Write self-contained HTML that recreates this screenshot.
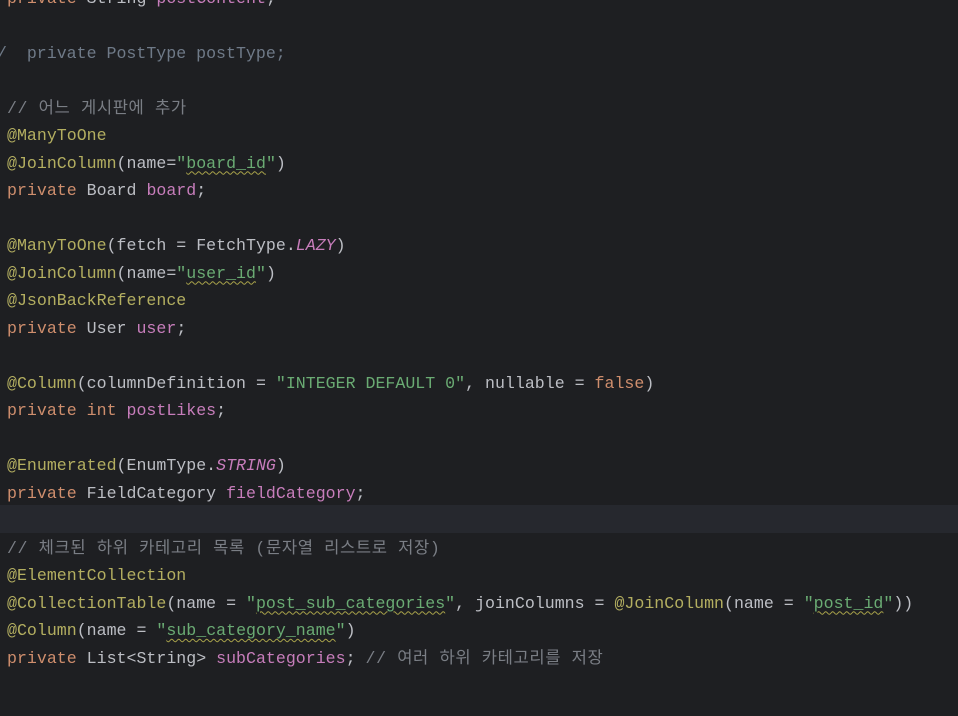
<!DOCTYPE html>
<html><head><meta charset="utf-8"><style>
html,body{margin:0;padding:0;background:#1e1f22;width:958px;height:716px;overflow:hidden}
.hl{position:absolute;left:0;top:505px;width:958px;height:28px;background:#26282e}
pre{position:absolute;left:7px;top:-15.5px;margin:0;font-family:"Liberation Mono","Noto Sans CJK KR",monospace;font-size:16.6px;line-height:27.5px;color:#bcbec4}
.k{color:#cf8e6d}.a{color:#b3ae60}.s{color:#6aab73}.f{color:#c77dbb}.c{color:#7a7e85;letter-spacing:0.6px}.i{color:#c77dbb;font-style:italic}
.w{text-decoration:underline wavy #a8a24a;text-decoration-thickness:1px;text-underline-offset:3px}
.cm{margin-left:-20px;color:#6f7a88}
</style></head><body>
<div class="hl"></div>
<pre><span class="k">private</span> String <span class="f">postContent</span>;

<span class="cm">//  private PostType postType;</span>

<span class="c">// 어느 게시판에 추가</span>
<span class="a">@ManyToOne</span>
<span class="a">@JoinColumn</span>(name=<span class="s">"<span class="w">board_id</span>"</span>)
<span class="k">private</span> Board <span class="f">board</span>;

<span class="a">@ManyToOne</span>(fetch = FetchType.<span class="i">LAZY</span>)
<span class="a">@JoinColumn</span>(name=<span class="s">"<span class="w">user_id</span>"</span>)
<span class="a">@JsonBackReference</span>
<span class="k">private</span> User <span class="f">user</span>;

<span class="a">@Column</span>(columnDefinition = <span class="s">"INTEGER DEFAULT 0"</span>, nullable = <span class="k">false</span>)
<span class="k">private int</span> <span class="f">postLikes</span>;

<span class="a">@Enumerated</span>(EnumType.<span class="i">STRING</span>)
<span class="k">private</span> FieldCategory <span class="f">fieldCategory</span>;

<span class="c">// 체크된 하위 카테고리 목록 (문자열 리스트로 저장)</span>
<span class="a">@ElementCollection</span>
<span class="a">@CollectionTable</span>(name = <span class="s">"<span class="w">post_sub_categories</span>"</span>, joinColumns = <span class="a">@JoinColumn</span>(name = <span class="s">"<span class="w">post_id</span>"</span>))
<span class="a">@Column</span>(name = <span class="s">"<span class="w">sub_category_name</span>"</span>)
<span class="k">private</span> List&lt;String&gt; <span class="f">subCategories</span>; <span class="c">// 여러 하위 카테고리를 저장</span>
</pre>
</body></html>
